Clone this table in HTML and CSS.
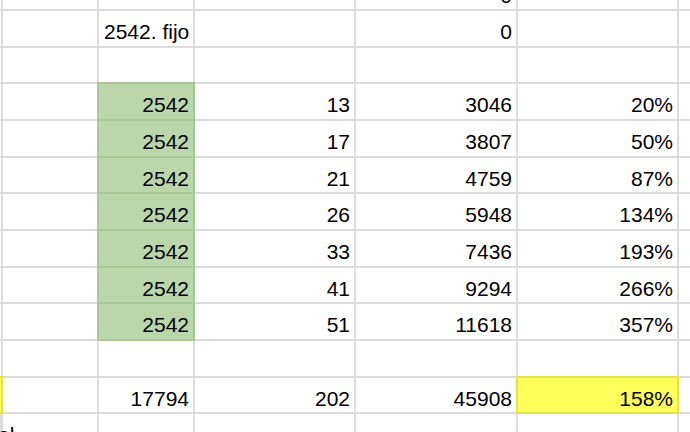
FILE: index.html
```html
<!DOCTYPE html>
<html>
<head>
<meta charset="utf-8">
<link rel="stylesheet" href="styles.css">
</head>
<body>
<div class="viewport">
  <div class="sheet">
    <!-- row 0 -->
    <div class="c"></div><div class="c"></div><div class="c"></div><div class="c"></div><div class="c num">0</div><div class="c"></div><div class="c"></div>
    <!-- row 1 -->
    <div class="c"></div><div class="c"></div><div class="c txt">2542. fijo</div><div class="c"></div><div class="c num">0</div><div class="c"></div><div class="c"></div>
    <!-- row 2 -->
    <div class="c"></div><div class="c"></div><div class="c"></div><div class="c"></div><div class="c"></div><div class="c"></div><div class="c"></div>
    <!-- data rows -->
    <div class="c"></div><div class="c"></div><div class="c num green">2542</div><div class="c num">13</div><div class="c num">3046</div><div class="c num">20%</div><div class="c"></div>
    <div class="c"></div><div class="c"></div><div class="c num green">2542</div><div class="c num">17</div><div class="c num">3807</div><div class="c num">50%</div><div class="c"></div>
    <div class="c"></div><div class="c"></div><div class="c num green">2542</div><div class="c num">21</div><div class="c num">4759</div><div class="c num">87%</div><div class="c"></div>
    <div class="c"></div><div class="c"></div><div class="c num green">2542</div><div class="c num">26</div><div class="c num">5948</div><div class="c num">134%</div><div class="c"></div>
    <div class="c"></div><div class="c"></div><div class="c num green">2542</div><div class="c num">33</div><div class="c num">7436</div><div class="c num">193%</div><div class="c"></div>
    <div class="c"></div><div class="c"></div><div class="c num green">2542</div><div class="c num">41</div><div class="c num">9294</div><div class="c num">266%</div><div class="c"></div>
    <div class="c"></div><div class="c"></div><div class="c num green">2542</div><div class="c num">51</div><div class="c num">11618</div><div class="c num">357%</div><div class="c"></div>
    <!-- row 10 -->
    <div class="c"></div><div class="c"></div><div class="c"></div><div class="c"></div><div class="c"></div><div class="c"></div><div class="c"></div>
    <!-- totals -->
    <div class="c yellow"></div><div class="c"></div><div class="c num">17794</div><div class="c num">202</div><div class="c num">45908</div><div class="c num yellow">158%</div><div class="c"></div>
    <!-- row 12 -->
    <div class="c txt overflow">Total</div><div class="c"></div><div class="c"></div><div class="c"></div><div class="c"></div><div class="c"></div><div class="c"></div>
  </div>
</div>
</body>
</html>
```

FILE: styles.css
```css
html, body {
  margin: 0;
  padding: 0;
  background: #ffffff;
  overflow: hidden;
}

.viewport {
  width: 690px;
  height: 432px;
  overflow: hidden;
}

.sheet {
  display: grid;
  grid-template-columns: 42px 94px 94px 159px 160px 159px 100px;
  grid-template-rows: repeat(13, 34.667px);
  gap: 2px;
  background: #dcdcdc;
  margin-left: -41px;
  margin-top: -25.667px;
  width: max-content;
  font-family: "Liberation Sans", Arial, Helvetica, sans-serif;
  font-size: 21px;
  line-height: 24px;
  color: #000;
}

.c {
  background: #ffffff;
  display: flex;
  align-items: flex-end;
  padding: 0 4px 1.5px 5px;
  white-space: nowrap;
  min-width: 0;
}

.num {
  justify-content: flex-end;
}

.txt {
  justify-content: flex-start;
}

.overflow {
  overflow: visible;
  position: relative;
  z-index: 1;
  background: transparent;
  align-items: flex-start;
  padding: 9px 0 0 11px;
}

.green {
  background: #b9d7aa;
  box-shadow: 0 0 0 2px #a6c996;
}

.yellow {
  background: #ffff5c;
  box-shadow: 0 0 0 2px #e6e24a;
}
```
